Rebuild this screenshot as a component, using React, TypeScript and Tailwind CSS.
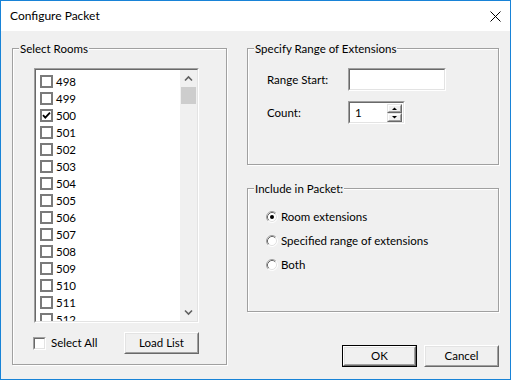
import React from "react";

const rooms = Array.from({ length: 15 }, (_, i) => 498 + i);

function ListCheck({ checked }: { checked?: boolean }) {
  return (
    <div className="w-[13px] h-[13px] border-2 border-[#7a7a7a] bg-white shrink-0">
      {checked && (
        <svg width="9" height="9" viewBox="0 0 9 9" className="block">
          <path d="M1 4.2 L3.3 6.6 L8 1.6" stroke="#000" strokeWidth="1.8" fill="none" />
        </svg>
      )}
    </div>
  );
}

function Sunken({ className, children }: { className?: string; children?: React.ReactNode }) {
  return (
    <div className={"border border-t-[#a0a0a0] border-l-[#a0a0a0] border-b-white border-r-white " + (className ?? "")}>
      <div className="w-full h-full border border-t-[#696969] border-l-[#696969] border-b-[#e3e3e3] border-r-[#e3e3e3] bg-white flex">
        {children}
      </div>
    </div>
  );
}

function Button({ label, isDefault }: { label: string; isDefault?: boolean }) {
  if (isDefault) {
    return (
      <div className="w-[75px] h-[22px] border border-[#000] bg-[#f0f0f0]">
        <div className="w-full h-full border border-t-white border-l-white border-b-[#696969] border-r-[#696969]">
          <div className="w-full h-full border border-t-[#e3e3e3] border-l-[#e3e3e3] border-b-[#a0a0a0] border-r-[#a0a0a0] flex items-center justify-center text-[11.5px] leading-none text-black">
            {label}
          </div>
        </div>
      </div>
    );
  }
  return (
    <div className="w-[75px] h-[22px] border border-t-white border-l-white border-b-[#696969] border-r-[#696969] bg-[#f0f0f0]">
      <div className="w-full h-full border border-t-[#e3e3e3] border-l-[#e3e3e3] border-b-[#a0a0a0] border-r-[#a0a0a0] flex items-center justify-center text-[11.5px] leading-none text-black">
        {label}
      </div>
    </div>
  );
}

function Radio({ checked }: { checked?: boolean }) {
  return (
    <svg width="12" height="12" viewBox="0 0 12 12" className="block shrink-0">
      <circle cx="6" cy="6" r="5" fill="#fff" />
      <path d="M2.11 9.89 A5.5 5.5 0 0 1 9.89 2.11" stroke="#a0a0a0" strokeWidth="1" fill="none" />
      <path d="M9.89 2.11 A5.5 5.5 0 0 1 2.11 9.89" stroke="#ffffff" strokeWidth="1" fill="none" />
      <path d="M2.82 9.18 A4.5 4.5 0 0 1 9.18 2.82" stroke="#696969" strokeWidth="1" fill="none" />
      <path d="M9.18 2.82 A4.5 4.5 0 0 1 2.82 9.18" stroke="#e3e3e3" strokeWidth="1" fill="none" />
      {checked && <circle cx="6" cy="6" r="2" fill="#000" />}
    </svg>
  );
}

function SpinBtn({ up }: { up?: boolean }) {
  return (
    <div className="w-[15px] h-[9px] border border-t-[#e3e3e3] border-l-[#e3e3e3] border-b-[#696969] border-r-[#696969] bg-[#f0f0f0]">
      <div className="w-full h-full border border-t-white border-l-white border-b-[#a0a0a0] border-r-[#a0a0a0] flex items-center justify-center">
        <svg width="5" height="3" viewBox="0 0 5 3" className="block">
          {up ? <path d="M0 3 L2.5 0.5 L5 3 Z" fill="#000" /> : <path d="M0 0 L2.5 2.5 L5 0 Z" fill="#000" />}
        </svg>
      </div>
    </div>
  );
}

function Group({ label, className, children }: { label: string; className?: string; children?: React.ReactNode }) {
  return (
    <div className={"relative border border-[#a0a0a0] shadow-[inset_1px_1px_0_#fff,1px_1px_0_#fff] " + (className ?? "")}>
      <span className="absolute -top-[8px] left-[6px] bg-[#f0f0f0] px-[1px] text-[11.5px] leading-[16px] text-black">
        {label}
      </span>
      {children}
    </div>
  );
}

export default function App() {
  return (
    <div className="w-[511px] h-[380px] border border-[#1883d7] bg-[#f0f0f0] flex flex-col font-['Lato',sans-serif] text-black overflow-hidden">
      {/* Title bar */}
      <div className="h-[30px] bg-white flex items-center pl-[9px] pr-[9px] shrink-0">
        <span className="text-[12px] leading-none">Configure Packet</span>
        <svg width="11" height="11" viewBox="0 0 11 11" className="ml-auto block">
          <path d="M0.5 0.5 L10.5 10.5 M10.5 0.5 L0.5 10.5" stroke="#000" strokeWidth="1" />
        </svg>
      </div>

      {/* Body */}
      <div className="flex pl-[11px] pt-[17px]">
        {/* Left group */}
        <Group label="Select Rooms" className="w-[215px] h-[317px] pl-[21px] pt-[19px]">
          <Sunken className="w-[165px] h-[255px]">
            <div className="flex-1 overflow-hidden pt-[3px]">
              {rooms.map((r) => (
                <div key={r} className="h-[17px] flex items-center pl-[4px] gap-[3px]">
                  <ListCheck checked={r === 500} />
                  <span className="text-[11.5px] leading-none">{r}</span>
                </div>
              ))}
            </div>
            <div className="w-[17px] bg-[#f0f0f0] flex flex-col shrink-0">
              <div className="h-[17px] shrink-0">
                <svg width="17" height="17" viewBox="0 0 17 17" className="block">
                  <path d="M5 10.5 L8.5 7 L12 10.5" stroke="#606060" strokeWidth="1.6" fill="none" />
                </svg>
              </div>
              <div className="h-[17px] mx-[1px] bg-[#cdcdcd] shrink-0" />
              <div className="flex-1" />
              <div className="h-[17px] shrink-0">
                <svg width="17" height="17" viewBox="0 0 17 17" className="block">
                  <path d="M5 6.5 L8.5 10 L12 6.5" stroke="#606060" strokeWidth="1.6" fill="none" />
                </svg>
              </div>
            </div>
          </Sunken>
          <div className="-ml-[1px] mt-[9px] w-[166px] h-[22px] flex items-center">
            <Sunken className="w-[13px] h-[13px]" />
            <span className="ml-[5px] text-[11.5px] leading-none">Select All</span>
            <div className="ml-auto">
              <Button label="Load List" />
            </div>
          </div>
        </Group>

        {/* Right column */}
        <div className="ml-[20px] w-[252px] flex flex-col">
          <Group label="Specify Range of Extensions" className="h-[117px] pl-[19px] pt-[19px]">
            <div className="flex items-center h-[23px]">
              <span className="w-[81px] text-[11.5px] leading-none">Range Start:</span>
              <Sunken className="w-[98px] h-[23px]" />
            </div>
            <div className="flex items-center h-[23px] mt-[10px]">
              <span className="w-[81px] text-[11.5px] leading-none">Count:</span>
              <Sunken className="w-[57px] h-[23px]">
                <div className="flex-1 flex items-center pl-[5px] text-[11.5px] leading-none">1</div>
                <div className="flex flex-col pr-[1px] pt-[1px]">
                  <SpinBtn up />
                  <SpinBtn />
                </div>
              </Sunken>
            </div>
          </Group>

          <Group label="Include in Packet:" className="mt-[23px] h-[124px] pl-[18px] pt-[16px]">
            {[
              { t: "Room extensions", c: true },
              { t: "Specified range of extensions", c: false },
              { t: "Both", c: false },
            ].map((o) => (
              <div key={o.t} className="h-[24px] flex items-center">
                <Radio checked={o.c} />
                <span className="ml-[3px] text-[11.5px] leading-none">{o.t}</span>
              </div>
            ))}
          </Group>

          <div className="mt-[33px] flex justify-end gap-[7px]">
            <Button label="OK" isDefault />
            <Button label="Cancel" />
          </div>
        </div>
      </div>
    </div>
  );
}
